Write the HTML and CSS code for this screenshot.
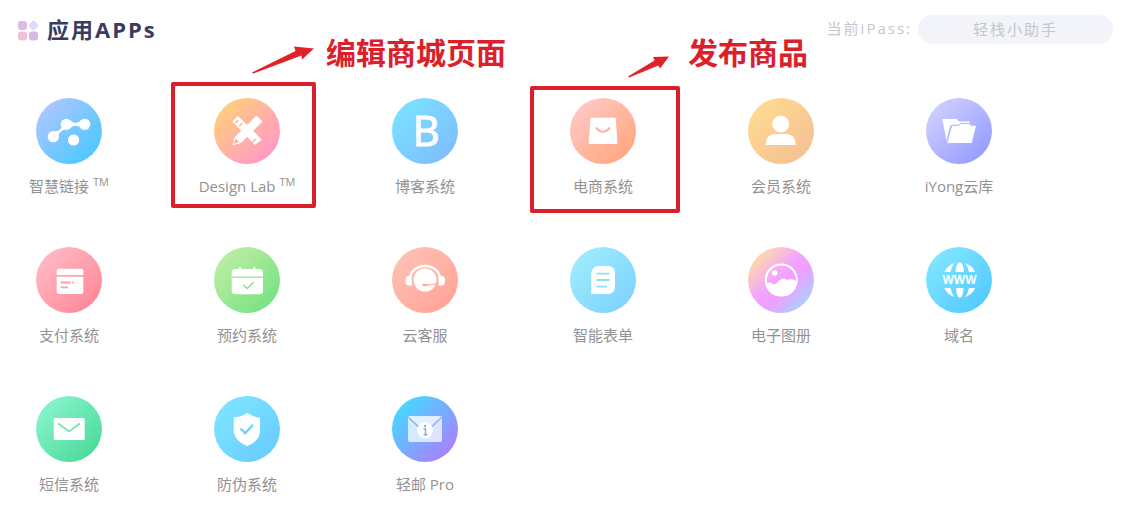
FILE: index.html
```html
<!DOCTYPE html>
<html lang="zh-CN">
<head>
<meta charset="utf-8">
<title>应用APPs</title>
<link rel="stylesheet" href="styles.css">
</head>
<body>
<header class="topbar">
  <svg class="logo" viewBox="0 0 20 20" aria-hidden="true">
    <rect x="0" y="0" width="9" height="9" rx="3" fill="#d9bce6"/>
    <rect x="11.500" y="0.500" width="8" height="8" rx="2.500" transform="rotate(45 15.500 4.500)" fill="#e0d9fa"/>
    <rect x="0" y="10.500" width="9" height="9" rx="3" fill="#f2bfdb"/>
    <rect x="11" y="10.500" width="9" height="9" rx="3" fill="#d4b9e9"/>
  </svg>
  <h1 class="title">应用APPs</h1>
  <span class="pass-label" id="pass-label">当前iPass:</span>
  <button class="pass" type="button" aria-describedby="pass-label">轻栈小助手</button>
</header>
<main class="apps">
  <a class="app" href="#link">
    <svg class="icon blue-link" viewBox="0 0 66 66" aria-hidden="true"><g fill="#fff"><circle cx="17.300" cy="38.700" r="5.600"/><circle cx="30.300" cy="26.300" r="5.600"/><circle cx="48.700" cy="26.300" r="5.600"/><circle cx="37.600" cy="42" r="5.600"/><path d="M19 33.500Q24 33 25.500 29L28.500 31.500Q24 33 22.500 37ZM34 22.500Q39.500 27.300 45 22.500V30Q39.500 25.300 34 30Z"/></g></svg>
    <span class="name">智慧链接 <sup class="tm">TM</sup></span>
  </a>
  <a class="app" href="#design">
    <svg class="icon design" viewBox="0 0 66 66" aria-hidden="true"><g fill="#fff"><path d="M18.300 23.500 24 18 47.700 41.500 41.500 47.500Z"/><path d="M41.500 18.500Q42.500 17.500 43.500 18.500L47.500 22.500Q48.500 23.500 47.500 24.500L27 45 18.500 47.500 20.500 39.500Z"/></g><path d="m21.500 25 3-2.700m.5 6 3.500-3.200m10 19 3.500-3m-.5 6.200 3-2.700" stroke="#ffb08f" stroke-width="1.300" fill="none"/><path d="m20 45.700 1.500-5.300 3.700 3.700Z" fill="#ffb291"/></svg>
    <span class="name">Design Lab <sup class="tm">TM</sup></span>
    <span class="frame frame-design"></span>
    <span class="note note-design">
      <svg class="arrow-long" viewBox="0 0 64 28" aria-hidden="true"><path d="M0 26.500 43.500 5 42 0.500 62 2.500 50 13.500 49.500 9.500 1 27.500Z" fill="#e02127"/></svg>
      编辑商城页面
    </span>
  </a>
  <a class="app" href="#blog">
    <svg class="icon blog" viewBox="0 0 66 66" aria-hidden="true"><text class="letter" x="34" y="48" text-anchor="middle">B</text></svg>
    <span class="name">博客系统</span>
  </a>
  <a class="app" href="#shop">
    <svg class="icon shop" viewBox="0 0 66 66" aria-hidden="true"><path d="M21.500 19.700H44.700Q45.700 19.700 45.800 20.700L47.400 45Q47.400 46 46.400 46H19.700Q18.700 46 18.700 45L20.500 20.700Q20.600 19.700 21.500 19.700Z" fill="#fff"/><path d="M26 29.500Q33 38 40 29.500" fill="none" stroke="#ffb09a" stroke-width="2"/></svg>
    <span class="name">电商系统</span>
    <span class="frame frame-shop"></span>
    <span class="note note-shop">
      <svg class="arrow-short" viewBox="0 0 42 22" aria-hidden="true"><path d="M0 20.500 26.500 4.500 25 1 41 0.500 32 12.500 30.500 9.500 1 21.500Z" fill="#e02127"/></svg>
      发布商品
    </span>
  </a>
  <a class="app" href="#member">
    <svg class="icon member" viewBox="0 0 66 66" aria-hidden="true"><g fill="#fff"><circle cx="32.700" cy="26" r="8.500"/><path d="M17.700 47Q17.700 36 28 36H37.500Q47.700 36 47.700 47Z"/></g></svg>
    <span class="name">会员系统</span>
  </a>
  <a class="app" href="#cloud">
    <svg class="icon cloud" viewBox="0 0 66 66" aria-hidden="true"><path d="M16.300 21H31L33 23.500H43.700V27H25.500Q24.500 27 24.200 28L20.500 43Z" fill="#fff"/><path d="M27 27.800H32L34.500 26.500H43.500L45 27.800H50L45.700 45H21.300L25.800 28.800Z" fill="#fff"/><path d="m20.700 43.500 4-14.500q.4-1.800 2.300-1.800h6l1.500-1.700H44" fill="none" stroke="#b4b6ff" stroke-width="1"/></svg>
    <span class="name">iYong云库</span>
  </a>
  <a class="app" href="#pay">
    <svg class="icon pay" viewBox="0 0 66 66" aria-hidden="true"><path d="M22.700 21.700H45.300Q47.300 21.700 47.300 23.700V28H20.700V23.700Q20.700 21.700 22.700 21.700ZM20.700 29.700H47.300V45Q47.300 47 45.300 47H22.700Q20.700 47 20.700 45Z" fill="#fff"/><path d="M24.700 35.500h10m1.500 0h1.500M24.700 40.300H32" stroke="#ff9cab" stroke-width="1.800"/></svg>
    <span class="name">支付系统</span>
  </a>
  <a class="app" href="#booking">
    <svg class="icon booking" viewBox="0 0 66 66" aria-hidden="true"><g fill="#fff"><rect x="17.700" y="22" width="31.300" height="25.300" rx="3.500"/><rect x="25" y="20" width="2" height="4" rx="1"/><rect x="39.300" y="20" width="2" height="4" rx="1"/></g><path d="M18 30.300H49" stroke="#a5e79c" stroke-width="1.400"/><path d="m29.300 38 4 3.500 6.200-6.300" fill="none" stroke="#88df8b" stroke-width="1.500"/></svg>
    <span class="name">预约系统</span>
  </a>
  <a class="app" href="#service">
    <svg class="icon service" viewBox="0 0 66 66" aria-hidden="true"><path d="M18 32a15 13 0 0 1 30 0" fill="none" stroke="#fff" stroke-width="2.500"/><g fill="#fff"><circle cx="33" cy="33" r="11.500"/><path d="M19.700 28.500V38.500H17Q13.500 38.500 13.500 35V32.500Q13.500 29 17 29ZM46.500 28.500V38.500H49.500Q53 38.500 53 35V32.500Q53 29 49.500 29Z"/></g><path d="M46 34.500Q43 37.500 37 37.200L32 36.500Q30 36.500 30 38T32.500 39.300L38 38.300Q44 38 46.500 35.500Z" fill="#ffae9f"/></svg>
    <span class="name">云客服</span>
  </a>
  <a class="app" href="#form">
    <svg class="icon form" viewBox="0 0 66 66" aria-hidden="true"><path d="M28 19H39Q45 20 45 26V40Q44.500 46 39 47H21.300V26Q22 20 28 19Z" fill="#fff"/><path d="M26.500 26.700h13M26.500 33h13m-13 6.700H37" stroke="#8bdffd" stroke-width="1.800"/></svg>
    <span class="name">智能表单</span>
  </a>
  <a class="app" href="#album">
    <svg class="icon album" viewBox="0 0 66 66" aria-hidden="true"><circle cx="33.300" cy="33" r="15.500" fill="none" stroke="#fff" stroke-width="2"/><circle cx="26.700" cy="26" r="2.700" fill="#fff"/><path d="M18 37Q21 34 25 37 28.500 38 30.500 34 35 29.500 39.500 33 44 30.500 49 35 47 49 33.300 49 20 49 18 37Z" fill="#fff"/></svg>
    <span class="name">电子图册</span>
  </a>
  <a class="app" href="#domain">
    <svg class="icon domain" viewBox="0 0 66 66" aria-hidden="true"><path d="M18.300 25Q22 18 28.500 16 25.500 19.500 24.500 25ZM29.500 25Q30 18 32.500 15.500H35Q37.500 18 38.200 25ZM39 16Q46 18.500 49.300 25H43Q42 19.500 39 16ZM18.300 41H24.500Q25.500 46.500 28.500 50 22 48 18.300 41ZM30 41H37.500Q37 49 35 50.500H32.500Q30.500 49 30 41ZM43 41H49.300Q46 47.500 39 50 42 46.500 43 41Z" fill="#fff"/><text class="www" x="33.500" y="37" text-anchor="middle">WWW</text></svg>
    <span class="name">域名</span>
  </a>
  <a class="app" href="#sms">
    <svg class="icon sms" viewBox="0 0 66 66" aria-hidden="true"><rect x="17.700" y="22" width="31" height="22" rx="1.500" fill="#fff"/><path d="M22.300 27.500 33 35.500 43.800 27.500" fill="none" stroke="#76e4b2" stroke-width="1.600"/></svg>
    <span class="name">短信系统</span>
  </a>
  <a class="app" href="#security">
    <svg class="icon security" viewBox="0 0 66 66" aria-hidden="true"><path d="M33 16.700Q38 21 46 21.500V36Q45 45.500 33 50 21 45.500 19.700 36V21.500Q28 21 33 16.700Z" fill="#fff"/><path d="m26.500 32.500 4.700 4.700 7.800-8.500" fill="none" stroke="#72d3ff" stroke-width="2.400"/></svg>
    <span class="name">防伪系统</span>
  </a>
  <a class="app" href="#mail">
    <svg class="icon mail" viewBox="0 0 66 66" aria-hidden="true"><rect x="16" y="20" width="34" height="26" rx="2" fill="#fff" fill-opacity=".72"/><path d="M17 20.500H49L33 34Z" fill="#fff" fill-opacity=".3"/><path d="M16.500 21.500 27 31.500M49.500 21.500 39 31.500" stroke="#8fa9f3" stroke-width="1.200"/><circle cx="33" cy="34.300" r="8" fill="#fff"/><path d="M31.500 33H33.500V38.500M31.500 38.700H35.500" fill="none" stroke="#899ef1" stroke-width="1.400"/><circle cx="33" cy="30.200" r="1.100" fill="#899ef1"/></svg>
    <span class="name">轻邮 Pro</span>
  </a>
</main>
</body>
</html>
```

FILE: styles.css
```css
* {
  box-sizing: border-box;
}

body {
  margin: 0;
  background: #fff;
  color: #929292;
  font-family: "Open Sans", "Noto Sans CJK SC", sans-serif;
}

.topbar {
  display: flex;
  align-items: center;
  padding: 14px 11px 0 18px;
}

.logo {
  width: 20px;
  height: 20px;
  margin-top: 3px;
}

.title {
  margin: 0 auto 0 9px;
  color: #373c60;
  font-size: 22px;
  font-weight: 700;
  line-height: 30px;
  letter-spacing: 2px;
}

.pass-label,
.pass {
  color: #c3c7cc;
  font-size: 15px;
  line-height: 29px;
  letter-spacing: 2px;
}

.pass-label {
  line-height: 26px;
  padding-bottom: 3px;
}

.pass {
  width: 195px;
  margin-left: 6px;
  padding: 0;
  border: 0;
  border-radius: 15px;
  background: #f2f4f9;
  font-family: inherit;
}

.apps {
  display: grid;
  grid-template-columns: repeat(6, 1fr);
  gap: 50px 40px;
  padding: 54px 96px 20px 0;
}

.app {
  position: relative;
  display: flex;
  flex-direction: column;
  align-items: center;
  gap: 11px;
  color: inherit;
  text-decoration: none;
}

.icon {
  width: 66px;
  height: 66px;
  border-radius: 50%;
}

.name {
  font-size: 15px;
  line-height: 22px;
  white-space: nowrap;
}

.tm {
  font-size: 11px;
  line-height: 0;
}

.letter {
  fill: #fff;
  stroke: #fff;
  font-family: "Open Sans", sans-serif;
  font-size: 42px;
}

.www {
  fill: #fff;
  font-family: "Liberation Sans", sans-serif;
  font-size: 12px;
  font-weight: 700;
}

.blue-link { background: linear-gradient(135deg, #b0c6ff 10%, #4fc8ff 85%); }
.design { background: linear-gradient(135deg, #ffd078 10%, #ff96cc 90%); }
.blog { background: linear-gradient(135deg, #7bddff 20%, #7fbdff 90%); }
.shop { background: linear-gradient(135deg, #ffc9c7 10%, #ffa67b 90%); }
.member { background: linear-gradient(135deg, #ffda92 15%, #f5c193 85%); }
.cloud { background: linear-gradient(135deg, #d0d0ff 10%, #999fff 85%); }
.pay { background: linear-gradient(135deg, #ffbbc5 10%, #ff8799 90%); }
.booking { background: linear-gradient(135deg, #c0eda6 10%, #79e384 85%); }
.service { background: linear-gradient(135deg, #ffbfb3 15%, #ffa698 85%); }
.form { background: linear-gradient(135deg, #9eebfd 15%, #7ed2ff 90%); }
.album { background: linear-gradient(135deg, #ffe1a0 10%, #f3a4ff 45%, #ee9fff 60%, #a4d5ff 90%); }
.domain { background: linear-gradient(135deg, #82e7ff 10%, #52c9ff 90%); }
.sms { background: linear-gradient(135deg, #88f5cc 10%, #4bd99a 90%); }
.security { background: linear-gradient(135deg, #7de3ff 15%, #69ccff 90%); }
.mail { background: linear-gradient(135deg, #42dcff 10%, #ac7eff 90%); }

.frame {
  position: absolute;
  border: 4px solid #dc202b;
  border-radius: 2px;
}

.frame-design {
  inset: -16px 0 -11px -7px;
}

.frame-shop {
  inset: -12px -8px -16px -4px;
}

.note {
  position: absolute;
  display: flex;
  gap: 10px;
  color: #dc202b;
  font-size: 30px;
  font-weight: 700;
  line-height: 36px;
  white-space: nowrap;
}

.note-design {
  top: -63px;
  left: 74px;
}

.note-shop {
  top: -63px;
  left: 94px;
  gap: 18px;
}

.arrow-long {
  width: 64px;
  height: 28px;
  margin-top: 11px;
}

.arrow-short {
  width: 42px;
  height: 22px;
  margin-top: 21px;
}
```
